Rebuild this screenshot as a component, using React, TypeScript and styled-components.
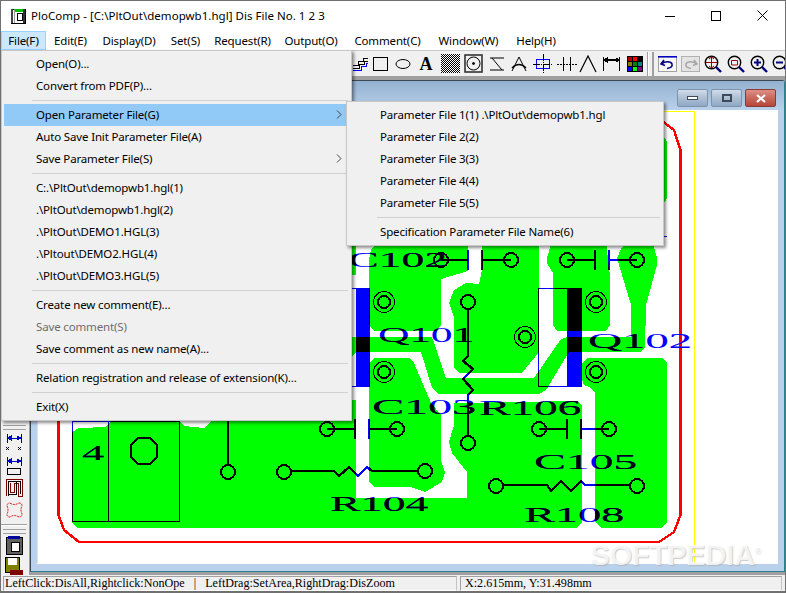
import { FC, ReactNode } from "react";
import styled, { createGlobalStyle } from "styled-components";

const GlobalStyle = createGlobalStyle`
  html, body {
    margin: 0;
    padding: 0;
    background: #fff;
  }
`;

const UI_FONT = `"Noto Sans", "Open Sans", sans-serif`;

const Window = styled.div`
  position: relative;
  width: 786px;
  height: 593px;
  box-sizing: border-box;
  border: 1px solid #707070;
  border-bottom-width: 2px;
  background: #f0f0f0;
  display: flex;
  flex-direction: column;
  overflow: hidden;
  font-family: ${UI_FONT};
  font-size: 11.5px;
  letter-spacing: -0.15px;
  color: #000;
`;

const TitleBar = styled.div`
  height: 29px;
  flex: none;
  background: #fff;
  display: flex;
  align-items: center;
  padding-left: 9px;
`;

const TitleText = styled.span`
  margin-left: 5px;
  font-size: 11.5px;
  letter-spacing: 0.03px;
  white-space: nowrap;
`;

const WindowControls = styled.div`
  margin-left: auto;
  display: flex;
  height: 100%;
`;

const WindowControl = styled.div`
  width: 46px;
  display: flex;
  align-items: center;
  justify-content: center;
`;

const MenuBar = styled.div`
  height: 20px;
  flex: none;
  background: #fff;
  display: flex;
  align-items: stretch;
`;

const MenuItem = styled.div<{ $active?: boolean; $width: number }>`
  width: ${(p) => p.$width}px;
  box-sizing: border-box;
  display: flex;
  align-items: center;
  justify-content: center;
  white-space: nowrap;
  margin-top: 1px;
  background: ${(p) => (p.$active ? "#cce8ff" : "transparent")};
  border: 1px solid ${(p) => (p.$active ? "#99d1ff" : "transparent")};
`;

const ToolBar = styled.div`
  height: 28px;
  flex: none;
  box-sizing: border-box;
  display: flex;
  align-items: center;
  padding-left: 348px;
  background: #f0f0f0;
  border-top: 1px solid #c8c8c8;
  border-bottom: 2px solid #a0a0a0;
`;

const ToolSlot = styled.div<{ $width?: number }>`
  width: ${(p) => p.$width ?? 22.8}px;
  height: 22px;
  flex: none;
  display: flex;
  align-items: center;
  justify-content: center;
`;

const ToolLetter = styled.span`
  font-family: "Liberation Serif", serif;
  font-weight: bold;
  font-size: 18px;
  line-height: 1;
`;

const ToolDivider = styled.div`
  width: 0;
  height: 24px;
  margin: 0 3px 0 2px;
  border-left: 1px solid #a0a0a0;
  border-right: 1px solid #fff;
`;

const ToolGrip = styled.div`
  width: 3px;
  height: 24px;
  margin-right: 2px;
  border-left: 1px solid #a0a0a0;
  border-right: 1px solid #a0a0a0;
`;

const Body = styled.div`
  flex: 1;
  min-height: 0;
  display: flex;
  background: #a0a0a0;
`;

const ToolStrip = styled.div`
  width: 26px;
  flex: none;
  padding-right: 2px;
  background: #f0f0f0;
  display: flex;
  flex-direction: column;
  justify-content: flex-end;
  align-items: center;
`;

const StripGrip = styled.div`
  width: 23px;
  height: 3px;
  flex: none;
  border-top: 1px solid #a0a0a0;
  border-bottom: 1px solid #a0a0a0;
`;

const StripRule = styled.div`
  width: 26px;
  height: 0;
  flex: none;
  margin: 3px 0;
  border-top: 1px solid #a0a0a0;
  border-bottom: 1px solid #fff;
`;

const StripSlot = styled.div<{ $height: number }>`
  height: ${(p) => p.$height}px;
  flex: none;
  display: flex;
  align-items: center;
  justify-content: center;
`;

const ChildWindow = styled.div`
  flex: 1;
  min-width: 0;
  margin: 2px 0 3px 1px;
  box-sizing: border-box;
  border: 1px solid #3a4a55;
  border-right-color: #2b7f8f;
  border-bottom-color: #2b7f8f;
  border-radius: 3px 3px 0 0;
  background: #b9d1ea;
  display: flex;
  flex-direction: column;
`;

const ChildTitle = styled.div`
  height: 29px;
  flex: none;
  display: flex;
  justify-content: flex-end;
  align-items: flex-start;
  gap: 3px;
  padding: 8px 8px 0 0;
  box-sizing: border-box;
  background: linear-gradient(#93b1d1, #b9d1ea);
`;

const ChildButton = styled.div<{ $close?: boolean }>`
  width: 31px;
  height: 18px;
  box-sizing: border-box;
  border: 1px solid ${(p) => (p.$close ? "#8a3a32" : "#7f93a8")};
  border-radius: 2px;
  display: flex;
  align-items: center;
  justify-content: center;
  background: ${(p) =>
    p.$close
      ? "linear-gradient(#dc8f85, #c9685c 50%, #b5473b)"
      : "linear-gradient(#d0dcea, #aebfd3 50%, #8ea9c6)"};
`;

const Canvas = styled.div`
  flex: 1;
  min-height: 0;
  margin: 0 6px 7px 6px;
  background: #fff;
`;

const Board = styled.svg`
  display: block;
  width: 737px;
  height: 453px;
`;

const StatusBar = styled.div`
  height: 16px;
  flex: none;
  padding: 1px 0 0 2px;
  box-sizing: border-box;
  display: flex;
  gap: 3px;
  font-family: "Liberation Serif", serif;
  font-size: 12.1px;
  letter-spacing: 0;
`;

const StatusPanel = styled.div<{ $width: number; $pad: number }>`
  width: ${(p) => p.$width}px;
  flex: none;
  box-sizing: border-box;
  padding-left: ${(p) => p.$pad}px;
  display: flex;
  gap: 9px;
  border: 1px solid;
  border-color: #a0a0a0 #c4c4c4 #fff #a0a0a0;
  white-space: pre;
  line-height: 13px;
  overflow: hidden;
`;

const Popup = styled.div<{ $left: number; $top: number; $width: number }>`
  position: absolute;
  left: ${(p) => p.$left}px;
  top: ${(p) => p.$top}px;
  width: ${(p) => p.$width}px;
  box-sizing: border-box;
  padding: 2px;
  background: #f0f0f0;
  border: 1px solid #c8c8c8;
  box-shadow: 2px 2px 3px rgba(0, 0, 0, 0.45);
`;

const PopupRow = styled.div<{ $active?: boolean; $disabled?: boolean; $indent: number }>`
  height: 22px;
  box-sizing: border-box;
  display: flex;
  align-items: center;
  justify-content: space-between;
  padding: 0 7px 2px ${(p) => p.$indent}px;
  white-space: nowrap;
  color: ${(p) => (p.$disabled ? "#6d6d6d" : "#000")};
  background: ${(p) => (p.$active ? "#91c9f7" : "transparent")};
`;

const PopupSeparator = styled.div`
  height: 1px;
  margin: 3px 1px 3px 28px;
  background: #d0d0d0;
`;

const Watermark = styled.div`
  position: absolute;
  left: 589px;
  top: 537px;
  font-family: "Liberation Sans", sans-serif;
  font-weight: bold;
  font-size: 29.5px;
  letter-spacing: -0.5px;
  color: rgba(255, 255, 255, 0.75);
  text-shadow: 1px 1px 1px rgba(170, 170, 170, 0.6);
  white-space: nowrap;
`;

const WatermarkMark = styled.sup`
  font-size: 9px;
  font-weight: normal;
`;

const Glyph: FC<{ w?: number; h?: number; children: ReactNode }> = ({ w = 18, h = 18, children }) => (
  <svg width={w} height={h} viewBox={`0 0 ${w} ${h}`} fill="none" stroke="#000" shapeRendering="crispEdges">
    {children}
  </svg>
);

const Chevron = () => (
  <svg width="6" height="9" viewBox="0 0 6 9" fill="none" stroke="#444" shapeRendering="geometricPrecision">
    <path d="M1 .5 5 4.5 1 8.5" />
  </svg>
);

const AppIcon = () => (
  <svg width="16" height="16" viewBox="0 0 16 16" shapeRendering="crispEdges">
    <rect x="1" y="1" width="14" height="14" fill="#fff" stroke="#000" />
    <rect x="4" y="1" width="9" height="3" fill="#00c000" />
    <rect x="1" y="1" width="2" height="14" fill="#444" />
    <rect x="4" y="2" width="1" height="13" fill="#999" />
    <rect x="13" y="1" width="2" height="14" fill="#333" />
    <rect x="7" y="5" width="5" height="7" fill="#fff" stroke="#000" />
  </svg>
);

const Lens: FC<{ children?: ReactNode }> = ({ children }) => (
  <svg width="18" height="18" viewBox="0 0 18 18" fill="none" stroke="#000">
    <circle cx="7.5" cy="7.5" r="6.2" strokeWidth="1.4" />
    <path d="M12 12 17 17" stroke="#000080" strokeWidth="2.4" />
    {children}
  </svg>
);

const COLORS = [
  "#b00000", "#ff0000", "#000000",
  "#808000", "#008000", "#008080",
  "#0000ff", "#00ff00", "#800080",
];

const MENUS: [string, number][] = [
  ["File(F)", 45], ["Edit(E)", 49], ["Display(D)", 68], ["Set(S)", 45], ["Request(R)", 69],
  ["Output(O)", 68], ["Comment(C)", 85], ["Window(W)", 77], ["Help(H)", 58],
];

type Row = { label?: string; sep?: boolean; active?: boolean; disabled?: boolean; arrow?: boolean };

const FILE_MENU: Row[] = [
  { label: "Open(O)..." },
  { label: "Convert from PDF(P)..." },
  { sep: true },
  { label: "Open Parameter File(G)", active: true, arrow: true },
  { label: "Auto Save Init Parameter File(A)" },
  { label: "Save Parameter File(S)", arrow: true },
  { sep: true },
  { label: "C:.\\PltOut\\demopwb1.hgl(1)" },
  { label: ".\\PltOut\\demopwb1.hgl(2)" },
  { label: ".\\PltOut\\DEMO1.HGL(3)" },
  { label: ".\\Pltout\\DEMO2.HGL(4)" },
  { label: ".\\PltOut\\DEMO3.HGL(5)" },
  { sep: true },
  { label: "Create new comment(E)..." },
  { label: "Save comment(S)", disabled: true },
  { label: "Save comment as new name(A)..." },
  { sep: true },
  { label: "Relation registration and release of extension(K)..." },
  { sep: true },
  { label: "Exit(X)" },
];

const PARAM_MENU: Row[] = [
  { label: "Parameter File 1(1) .\\PltOut\\demopwb1.hgl" },
  { label: "Parameter File 2(2)" },
  { label: "Parameter File 3(3)" },
  { label: "Parameter File 4(4)" },
  { label: "Parameter File 5(5)" },
  { sep: true },
  { label: "Specification Parameter File Name(6)" },
];

const PopupMenu: FC<{ left: number; top: number; width: number; indent: number; rows: Row[] }> = ({ left, top, width, indent, rows }) => (
  <Popup $left={left} $top={top} $width={width}>
    {rows.map((r, i) =>
      r.sep ? (
        <PopupSeparator key={i} />
      ) : (
        <PopupRow key={i} $active={r.active} $disabled={r.disabled} $indent={indent}>
          <span>{r.label}</span>
          {r.arrow && <Chevron />}
        </PopupRow>
      )
    )}
  </Popup>
);

// copper areas, in page coordinates
const COPPER = [
  "351,240 357,240 357,275 351,275",
  "372,250 380,240 469,240 469,271 442,279 442,325 437,331 375,331 370,325 370,260",
  "483,240 540,240 540,352 523,373 460,373 455,368 455,317 450,303 455,290 467,283 480,284 483,270",
  "548,258 553,240 607,240 610,270 611,273 611,325 607,331 558,331 554,325 554,273 548,263",
  "351,337 433,337 447,378 535,378 562,339 568,337 632,337 632,305 620,265 618,258 623,247 632,240 650,240 655,247 658,258 658,265 647,305 646,347 642,352 570,352 547,390 540,394 440,394 433,388 422,352 357,352 351,358",
  "370,363 375,358 410,358 415,363 432,403 442,415 442,460 446,473 443,482 426,492 411,487 375,487 370,482",
  "73,432 80,428 107,427 112,421 180,421 185,426 205,428 213,421 340,421 351,400 357,400 357,498 468,498 468,472 453,453 450,442 455,425 455,403 578,401 583,405 583,522 577,528 78,528 73,522",
  "583,363 588,358 663,358 668,363 668,522 662,528 602,528 596,522 596,393 590,387 585,385 583,380",
  "640,140 655,133 664,135 668,142 668,198 664,205 640,205",
];

const Pad: FC<{ x: number; y: number }> = ({ x, y }) => <circle cx={x} cy={y} r="7" strokeWidth="2" />;

const Mount: FC<{ x: number; y: number }> = ({ x, y }) => (
  <>
    <circle cx={x} cy={y} r="10.5" strokeWidth="1" />
    <circle cx={x} cy={y} r="6" strokeWidth="2" />
  </>
);

const Cap: FC<{ a: number; b: number; c: number; d: number; y: number }> = ({ a, b, c, d, y }) => (
  <>
    <Pad x={a} y={y} />
    <Pad x={d} y={y} />
    <path d={`M${a} ${y}H${b}M${b} ${y - 10}V${y + 10}M${c} ${y - 10}V${y + 10}M${c} ${y}H${d}`} strokeWidth="2" />
  </>
);

const Label: FC<{ x: number; y: number; w: number; children: string }> = ({ x, y, w, children }) => (
  <text x={x} y={y} textLength={w} lengthAdjust="spacingAndGlyphs" fontFamily="Liberation Serif, serif" fontSize="22" fill="currentColor" stroke="none">
    {children}
  </text>
);

const PcbDrawing = () => (
  <Board viewBox="38 110 737 453" shapeRendering="crispEdges">
    <defs>
      <clipPath id="copper">
        {COPPER.map((p) => (
          <polygon key={p} points={p} />
        ))}
      </clipPath>
      <g id="traces" stroke="currentColor" fill="none">
        <Cap a={442} b={469} c={483} d={512} y={260} />
        <Cap a={568} b={596} c={610} d={638} y={260} />
        <Cap a={328} b={356} c={370} d={398} y={429} />
        <Cap a={540} b={568} c={582} d={610} y={429} />
        <Mount x={385} y={302} />
        <Mount x={597} y={302} />
        <Mount x={526} y={337} />
        <Mount x={385} y={372} />
        <Mount x={597} y={372} />
        <Pad x={469} y={302} />
        <Pad x={469} y={443} />
        <path d="M469 309V356L464 361 474 369 464 379 474 390 469 395V436" strokeWidth="2.4" />
        <Pad x={229} y={472} />
        <path d="M229 420V465" strokeWidth="2" />
        <Pad x={285} y={472} />
        <Pad x={426} y={471} />
        <path d="M292 471H335L340 476 350 467 359 476 368 467 373 471H419" strokeWidth="2.4" />
        <Pad x={497} y={486} />
        <Pad x={638} y={486} />
        <path d="M504 485H548L552 491 562 481 572 491 582 481 586 485H631" strokeWidth="2.4" />
        <rect x="357" y="288" width="14" height="99" fill="currentColor" stroke="none" />
        <path d="M340 288.5H357M340 386.5H357" strokeWidth="1" />
        <rect x="568" y="288" width="15" height="99" fill="currentColor" stroke="none" />
        <rect x="539.5" y="288.5" width="29" height="98" strokeWidth="1" />
        <rect x="73.5" y="421" width="107" height="100" strokeWidth="1" />
        <path d="M109.5 421V521" strokeWidth="1" />
        <path d="M139 438H151L158 445V457L151 464H139L132 457V445Z" strokeWidth="2" />
        <path d="M663 236.5H668" strokeWidth="1" />
        <Label x={349} y={267} w={99}>C102</Label>
        <Label x={379} y={342} w={96}>Q101</Label>
        <Label x={589} y={348} w={104}>Q102</Label>
        <Label x={373} y={414} w={104}>C103</Label>
        <Label x={480} y={415} w={102}>R106</Label>
        <Label x={535} y={469} w={103}>C105</Label>
        <Label x={331} y={511} w={98}>R104</Label>
        <Label x={525} y={522} w={100}>R108</Label>
        <Label x={83} y={460} w={22}>4</Label>
      </g>
    </defs>
    <path d="M38.5 563V111.5H695.5V563" fill="none" stroke="#ffff00" />
    {COPPER.map((p) => (
      <polygon key={p} points={p} fill="#00ff00" />
    ))}
    <path
      d="M59.5 140V515L65 530 80 542H660L675 532 681.5 515V150L675 130 663 121H80"
      fill="none"
      stroke="#ff0000"
      strokeWidth="2.4"
    />
    <use href="#traces" color="#0000ff" />
    <use href="#traces" color="#000000" clipPath="url(#copper)" />
  </Board>
);

const App: FC = () => (
  <>
    <GlobalStyle />
    <Window>
      <TitleBar>
        <AppIcon />
        <TitleText>PloComp - [C:\PltOut\demopwb1.hgl] Dis File No. 1 2 3</TitleText>
        <WindowControls>
          <WindowControl>
            <Glyph w={10} h={10}><path d="M0 5.5H10" /></Glyph>
          </WindowControl>
          <WindowControl>
            <Glyph w={10} h={10}><rect x=".5" y=".5" width="9" height="9" /></Glyph>
          </WindowControl>
          <WindowControl>
            <svg width="11" height="11" viewBox="0 0 11 11" stroke="#000"><path d="M.5 .5 10.5 10.5M10.5 .5 .5 10.5" /></svg>
          </WindowControl>
        </WindowControls>
      </TitleBar>
      <MenuBar>
        {MENUS.map(([label, width], i) => (
          <MenuItem key={label} $width={width} $active={i === 0}>{label}</MenuItem>
        ))}
      </MenuBar>
      <ToolBar>
        <ToolSlot $width={22}>
          <Glyph>
            <path d="M2 10H7V6H12V3H17M2 13H8V9H13V6H17" />
            <path d="M2 15H10V11H15V8H17" stroke="#0000ff" />
          </Glyph>
        </ToolSlot>
        <ToolSlot $width={20}><Glyph w={16} h={16}><rect x=".5" y="1.5" width="14" height="13" /></Glyph></ToolSlot>
        <ToolSlot $width={23}>
          <svg width="16" height="12" viewBox="0 0 16 12" fill="none" stroke="#000"><ellipse cx="8" cy="6" rx="7" ry="4.5" /></svg>
        </ToolSlot>
        <ToolSlot $width={24}><ToolLetter>A</ToolLetter></ToolSlot>
        <ToolSlot $width={24}>
          <svg width="19" height="19" viewBox="0 0 19 19" shapeRendering="crispEdges">
            <pattern id="hatch" width="2" height="2" patternUnits="userSpaceOnUse">
              <rect width="1" height="1" fill="#000" />
              <rect x="1" y="1" width="1" height="1" fill="#000" />
            </pattern>
            <rect width="19" height="19" fill="#fff" />
            <rect width="19" height="19" fill="url(#hatch)" />
          </svg>
        </ToolSlot>
        <ToolSlot $width={23}>
          <svg width="19" height="19" viewBox="0 0 19 19" fill="none" stroke="#000">
            <rect x="1" y="1" width="17" height="17" strokeWidth="1.6" stroke="#333" />
            <circle cx="9.5" cy="9.5" r="6.5" />
            <circle cx="9.5" cy="9.5" r="1" fill="#000" />
          </svg>
        </ToolSlot>
        <ToolSlot $width={23}>
          <svg width="16" height="16" viewBox="0 0 16 16" fill="none" stroke="#000">
            <path d="M1 2H15M1 14H15M3 2 13 14" />
          </svg>
        </ToolSlot>
        <ToolSlot $width={21}>
          <svg width="16" height="16" viewBox="0 0 16 16" fill="none" stroke="#000">
            <path d="M1 15 8 1 15 15" />
            <path d="M1 12Q8 5 15 12" strokeWidth="1.4" />
          </svg>
        </ToolSlot>
        <ToolSlot $width={28}>
          <svg width="20" height="20" viewBox="0 0 20 20" fill="none" shapeRendering="crispEdges">
            <rect x="3.5" y="5.5" width="13" height="9" stroke="#0000ff" />
            <path d="M10.5 0V20M0 10.5H20" stroke="#000" strokeDasharray="7 1 1 1" />
          </svg>
        </ToolSlot>
        <ToolSlot $width={20}>
          <Glyph w={20} h={18}>
            <path d="M6.5 2V16M13.5 2V16" />
            <path d="M0 9.5H20" strokeDasharray="2 1" />
          </Glyph>
        </ToolSlot>
        <ToolSlot $width={22}>
          <svg width="18" height="18" viewBox="0 0 18 18" fill="none" stroke="#000">
            <path d="M1 17 9 1 17 17" strokeWidth="1.2" />
          </svg>
        </ToolSlot>
        <ToolSlot $width={25}>
          <Glyph w={18} h={16}>
            <path d="M.5 1V15M16.5 1V15M1 4H16" strokeWidth="1.4" />
            <path d="M1 4 4 2V6ZM16 4 13 2V6Z" fill="#000" />
          </Glyph>
        </ToolSlot>
        <ToolSlot $width={21}>
          <svg width="16" height="16" viewBox="0 0 16 16" shapeRendering="crispEdges">
            <rect width="16" height="16" fill="#000" />
            {COLORS.map((c, i) => (
              <rect key={i} x={1 + (i % 3) * 5} y={1 + Math.floor(i / 3) * 5} width="4" height="4" fill={c} />
            ))}
          </svg>
        </ToolSlot>
        <ToolDivider />
        <ToolGrip />
        <ToolSlot>
          <svg width="19" height="16" viewBox="0 0 19 16" fill="#f8f8f8" stroke="#a0a0a0">
            <rect x=".5" y=".5" width="18" height="15" />
            <path d="M0 .8H19" stroke="#0000c0" strokeWidth="1.6" />
            <path d="M6 4 3 8 7 9.5M3.5 8C7 5 13 5 14 8S12 12 9 12.5" fill="none" stroke="#000080" strokeWidth="1.6" />
          </svg>
        </ToolSlot>
        <ToolSlot>
          <svg width="19" height="16" viewBox="0 0 19 16" fill="#e4e4e4" stroke="#b0b0b0">
            <rect x=".5" y=".5" width="18" height="15" />
            <path d="M13 4 16 8 12 9.5M15.5 8C12 5 6 5 5 8S7 12 10 12.5" fill="none" stroke="#a8a8a8" strokeWidth="1.6" />
          </svg>
        </ToolSlot>
        <ToolSlot>
          <Lens>
            <path d="M7.5 2V13M2 7.5H13" stroke="#a00000" />
            <path d="M5 4 7.5 2 10 4M5 11 7.5 13 10 11" stroke="#a00000" />
          </Lens>
        </ToolSlot>
        <ToolSlot>
          <Lens>
            <path d="M4.5 10V5.5H10.5M4.5 10H10.5V5.5" stroke="#a00000" />
          </Lens>
        </ToolSlot>
        <ToolSlot>
          <Lens>
            <path d="M4 7.5H11M7.5 4V11" stroke="#000080" strokeWidth="2" />
          </Lens>
        </ToolSlot>
        <ToolSlot>
          <Lens>
            <path d="M4 7.5H11" stroke="#000080" strokeWidth="2" />
          </Lens>
        </ToolSlot>
      </ToolBar>
      <Body>
        <ToolStrip>
          <StripGrip />
          <StripSlot $height={24}>
            <Glyph w={16} h={18}>
              <path d="M1 1V10M15 1V10" stroke="#000080" />
              <path d="M1 5H15M1 5 5 3V7ZM15 5 11 3V7Z" stroke="#0000c0" fill="#0000c0" />
              <path d="M0 14 3 17M3 14 0 17M12 14 15 17M15 14 12 17" />
            </Glyph>
          </StripSlot>
          <StripSlot $height={24}>
            <Glyph w={16} h={20}>
              <path d="M1 1V10M15 1V10" stroke="#000080" />
              <path d="M1 5H15M1 5 5 3V7ZM15 5 11 3V7Z" stroke="#0000c0" fill="#0000c0" />
              <rect x="1.5" y="12.5" width="13" height="6" />
            </Glyph>
          </StripSlot>
          <StripSlot $height={20}>
            <Glyph w={17} h={18}>
              <path d="M.5 17V.5H16.5V17H12.5V4.5H8.5V13.5H4.5V4" stroke="#800000" />
              <path d="M2.5 17V2.5H14.5V15M10.5 3V15.5H2.5" stroke="#000" />
            </Glyph>
          </StripSlot>
          <StripSlot $height={23}>
            <svg width="17" height="16" viewBox="0 0 17 16" fill="none" stroke="#e00000" strokeDasharray="2 1">
              <path d="M4 1Q8 4 13 1 16 1 16 4 14 8 16 12 16 15 13 15 8 12 4 15 1 15 1 12 3 8 1 4 1 1 4 1Z" />
            </svg>
          </StripSlot>
          <StripRule />
          <StripGrip />
          <StripSlot $height={22}>
            <svg width="18" height="19" viewBox="0 0 18 19" shapeRendering="crispEdges">
              <rect x="1" y="1" width="16" height="17" fill="#606060" stroke="#000" />
              <rect x="3" y="0" width="12" height="3" fill="#0000a0" />
              <rect x="6" y="6" width="8" height="9" fill="#fff" stroke="#000" />
            </svg>
          </StripSlot>
          <StripSlot $height={19}>
            <svg width="18" height="18" viewBox="0 0 18 18" shapeRendering="crispEdges">
              <rect x=".5" y=".5" width="14" height="15" fill="#808000" stroke="#000" />
              <rect x="3" y="1" width="9" height="7" fill="#fff" />
              <rect x="5" y="13" width="13" height="5" fill="#800000" />
            </svg>
          </StripSlot>
        </ToolStrip>
        <ChildWindow>
          <ChildTitle>
            <ChildButton>
              <Glyph w={11} h={5}><rect x=".5" y=".5" width="10" height="3" fill="#fff" stroke="#3c4a5a" /></Glyph>
            </ChildButton>
            <ChildButton>
              <Glyph w={10} h={8}><rect x="1" y="1" width="8" height="6" fill="none" stroke="#3c4a5a" strokeWidth="1.5" /></Glyph>
            </ChildButton>
            <ChildButton $close>
              <svg width="12" height="9" viewBox="0 0 12 9" stroke="#fff" strokeWidth="2.2"><path d="M2 1 10 8M10 1 2 8" /></svg>
            </ChildButton>
          </ChildTitle>
          <Canvas>
            <PcbDrawing />
          </Canvas>
        </ChildWindow>
      </Body>
      <StatusBar>
        <StatusPanel $width={454} $pad={1}>
          <span>LeftClick:DisAll,Rightclick:NonOpe</span>
          <span>|</span>
          <span>LeftDrag:SetArea,RightDrag:DisZoom</span>
        </StatusPanel>
        <StatusPanel $width={322} $pad={4}>
          <span>X:2.615mm, Y:31.498mm</span>
        </StatusPanel>
      </StatusBar>
      <PopupMenu left={0} top={49} width={351} indent={32} rows={FILE_MENU} />
      <PopupMenu left={345} top={100} width={318} indent={31} rows={PARAM_MENU} />
      <Watermark>SOFTPEDIA<WatermarkMark>®</WatermarkMark></Watermark>
    </Window>
  </>
);

export default App;
